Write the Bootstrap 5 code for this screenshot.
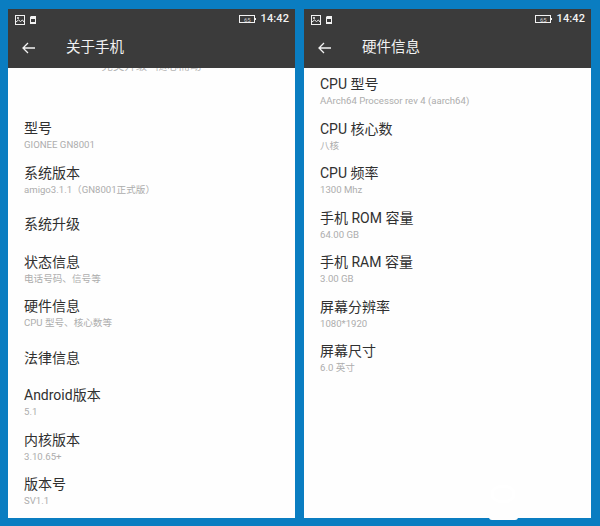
<!DOCTYPE html>
<html lang="zh">
<head>
  <meta charset="UTF-8">
  <meta name="viewport" content="width=device-width, initial-scale=1">
  <title>关于手机</title>
  <link href="https://cdn.jsdelivr.net/npm/bootstrap@5.3.0/dist/css/bootstrap.min.css" rel="stylesheet">
  <style>
    html, body { height: 526px; overflow: hidden; }
    body { background: #0a7dc1; font-family: "Roboto", "Noto Sans CJK SC", sans-serif; }
    .shots { width: 600px; height: 526px; padding: 9px 9px 8px 8px; gap: 9px; }
    .phone { width: 287px; height: 509px; background: #fefefe; overflow: hidden; }
    .top-area { height: 59px; background: #3b3b3b; color: #f2f2f2; }
    .status-row { height: 20px; padding: 1px 6px 0 7px; }
    .clock { font-size: 11px; font-weight: 500; letter-spacing: .1px; }
    .bat-num { font-size: 6px; fill: #ccc; font-family: "Roboto", sans-serif; }
    .title-row { height: 38px; padding-left: 14px; }
    .page-title { font-size: 14.5px; margin-left: 30px; }
    .cut-line { height: 6px; overflow: hidden; text-align: center; color: #b5b5b5; font-size: 11.4px; line-height: 6px; }
    .cut-line span { position: relative; top: -5px; }
    .pref-list { padding-left: 16px; color: #303030; }
    .pref-row { height: 44.5px; }
    .pref-name { font-size: 14px; line-height: 19px; }
    .pref-sub { font-size: 9.6px; line-height: 13px; color: #adadad; }
    .spacer-left { height: 45px; }
    .spacer-right { height: 7px; }
    .plain-row { padding-top: 7px; }
    .wm-ring { position: absolute; left: 489px; top: 483px; }
    .wm-bump { position: absolute; left: 489px; top: 517px; width: 29px; height: 3px; background: #fefefe; border-radius: 0 0 4px 4px; }
  </style>
</head>
<body>
  <div class="shots d-flex">
    <div class="phone d-flex flex-column">
      <div class="top-area flex-shrink-0">
        <div class="status-row d-flex align-items-center">
          <svg width="10" height="10" viewBox="0 0 10 10" fill="none" stroke="#f2f2f2"><rect x=".5" y=".5" width="9" height="9"/><path d="M1 7l2.500-2 2 1.500L7.500 5 9 7"/><circle cx="3" cy="3" r=".7"/></svg>
          <svg class="ms-1" width="8" height="10" viewBox="0 0 8 10"><path d="M2 1h5v8H1V2z" fill="#f2f2f2"/><rect x="2" y="4" width="4" height="3" fill="#3b3b3b"/></svg>
          <svg class="ms-auto" width="18" height="9" viewBox="0 0 18 9" fill="none" stroke="#f2f2f2"><rect x=".5" y=".5" width="15" height="7"/><path d="M16.500 3v2"/><text class="bat-num" x="5" y="6.500" stroke="none">65</text></svg>
          <span class="clock ms-1">14:42</span>
        </div>
        <div class="title-row d-flex align-items-center">
          <svg width="14" height="12" viewBox="0 0 14 12" fill="none" stroke="#f2f2f2" stroke-width="1.300"><path d="M13 6H1M6 1L1 6l5 5"/></svg>
          <span class="page-title">关于手机</span>
        </div>
      </div>
      <div class="cut-line flex-shrink-0"><span>完美升级 · 随心而动</span></div>
      <div class="spacer-left flex-shrink-0"></div>
      <div class="pref-list flex-shrink-0">
        <div class="pref-row"><div class="pref-name">型号</div><div class="pref-sub">GIONEE GN8001</div></div>
        <div class="pref-row"><div class="pref-name">系统版本</div><div class="pref-sub">amigo3.1.1（GN8001正式版）</div></div>
        <div class="pref-row plain-row pref-name">系统升级</div>
        <div class="pref-row"><div class="pref-name">状态信息</div><div class="pref-sub">电话号码、信号等</div></div>
        <div class="pref-row"><div class="pref-name">硬件信息</div><div class="pref-sub">CPU 型号、核心数等</div></div>
        <div class="pref-row plain-row pref-name">法律信息</div>
        <div class="pref-row"><div class="pref-name">Android版本</div><div class="pref-sub">5.1</div></div>
        <div class="pref-row"><div class="pref-name">内核版本</div><div class="pref-sub">3.10.65+</div></div>
        <div class="pref-row"><div class="pref-name">版本号</div><div class="pref-sub">SV1.1</div></div>
      </div>
    </div>
    <div class="phone d-flex flex-column">
      <div class="top-area flex-shrink-0">
        <div class="status-row d-flex align-items-center">
          <svg width="10" height="10" viewBox="0 0 10 10" fill="none" stroke="#f2f2f2"><rect x=".5" y=".5" width="9" height="9"/><path d="M1 7l2.500-2 2 1.500L7.500 5 9 7"/><circle cx="3" cy="3" r=".7"/></svg>
          <svg class="ms-1" width="8" height="10" viewBox="0 0 8 10"><path d="M2 1h5v8H1V2z" fill="#f2f2f2"/><rect x="2" y="4" width="4" height="3" fill="#3b3b3b"/></svg>
          <svg class="ms-auto" width="18" height="9" viewBox="0 0 18 9" fill="none" stroke="#f2f2f2"><rect x=".5" y=".5" width="15" height="7"/><path d="M16.500 3v2"/><text class="bat-num" x="5" y="6.500" stroke="none">65</text></svg>
          <span class="clock ms-1">14:42</span>
        </div>
        <div class="title-row d-flex align-items-center">
          <svg width="14" height="12" viewBox="0 0 14 12" fill="none" stroke="#f2f2f2" stroke-width="1.300"><path d="M13 6H1M6 1L1 6l5 5"/></svg>
          <span class="page-title">硬件信息</span>
        </div>
      </div>
      <div class="spacer-right flex-shrink-0"></div>
      <div class="pref-list flex-shrink-0">
        <div class="pref-row"><div class="pref-name">CPU 型号</div><div class="pref-sub">AArch64 Processor rev 4 (aarch64)</div></div>
        <div class="pref-row"><div class="pref-name">CPU 核心数</div><div class="pref-sub">八核</div></div>
        <div class="pref-row"><div class="pref-name">CPU 频率</div><div class="pref-sub">1300 Mhz</div></div>
        <div class="pref-row"><div class="pref-name">手机 ROM 容量</div><div class="pref-sub">64.00 GB</div></div>
        <div class="pref-row"><div class="pref-name">手机 RAM 容量</div><div class="pref-sub">3.00 GB</div></div>
        <div class="pref-row"><div class="pref-name">屏幕分辨率</div><div class="pref-sub">1080*1920</div></div>
        <div class="pref-row"><div class="pref-name">屏幕尺寸</div><div class="pref-sub">6.0 英寸</div></div>
      </div>
    </div>
  </div>
  <svg class="wm-ring" width="28" height="22" viewBox="0 0 28 22" fill="none" stroke="#fff" stroke-width="3"><ellipse cx="14" cy="11" rx="11" ry="8"/></svg>
  <div class="wm-bump"></div>
  <script src="https://cdn.jsdelivr.net/npm/bootstrap@5.3.0/dist/js/bootstrap.bundle.min.js"></script>
</body>
</html>
